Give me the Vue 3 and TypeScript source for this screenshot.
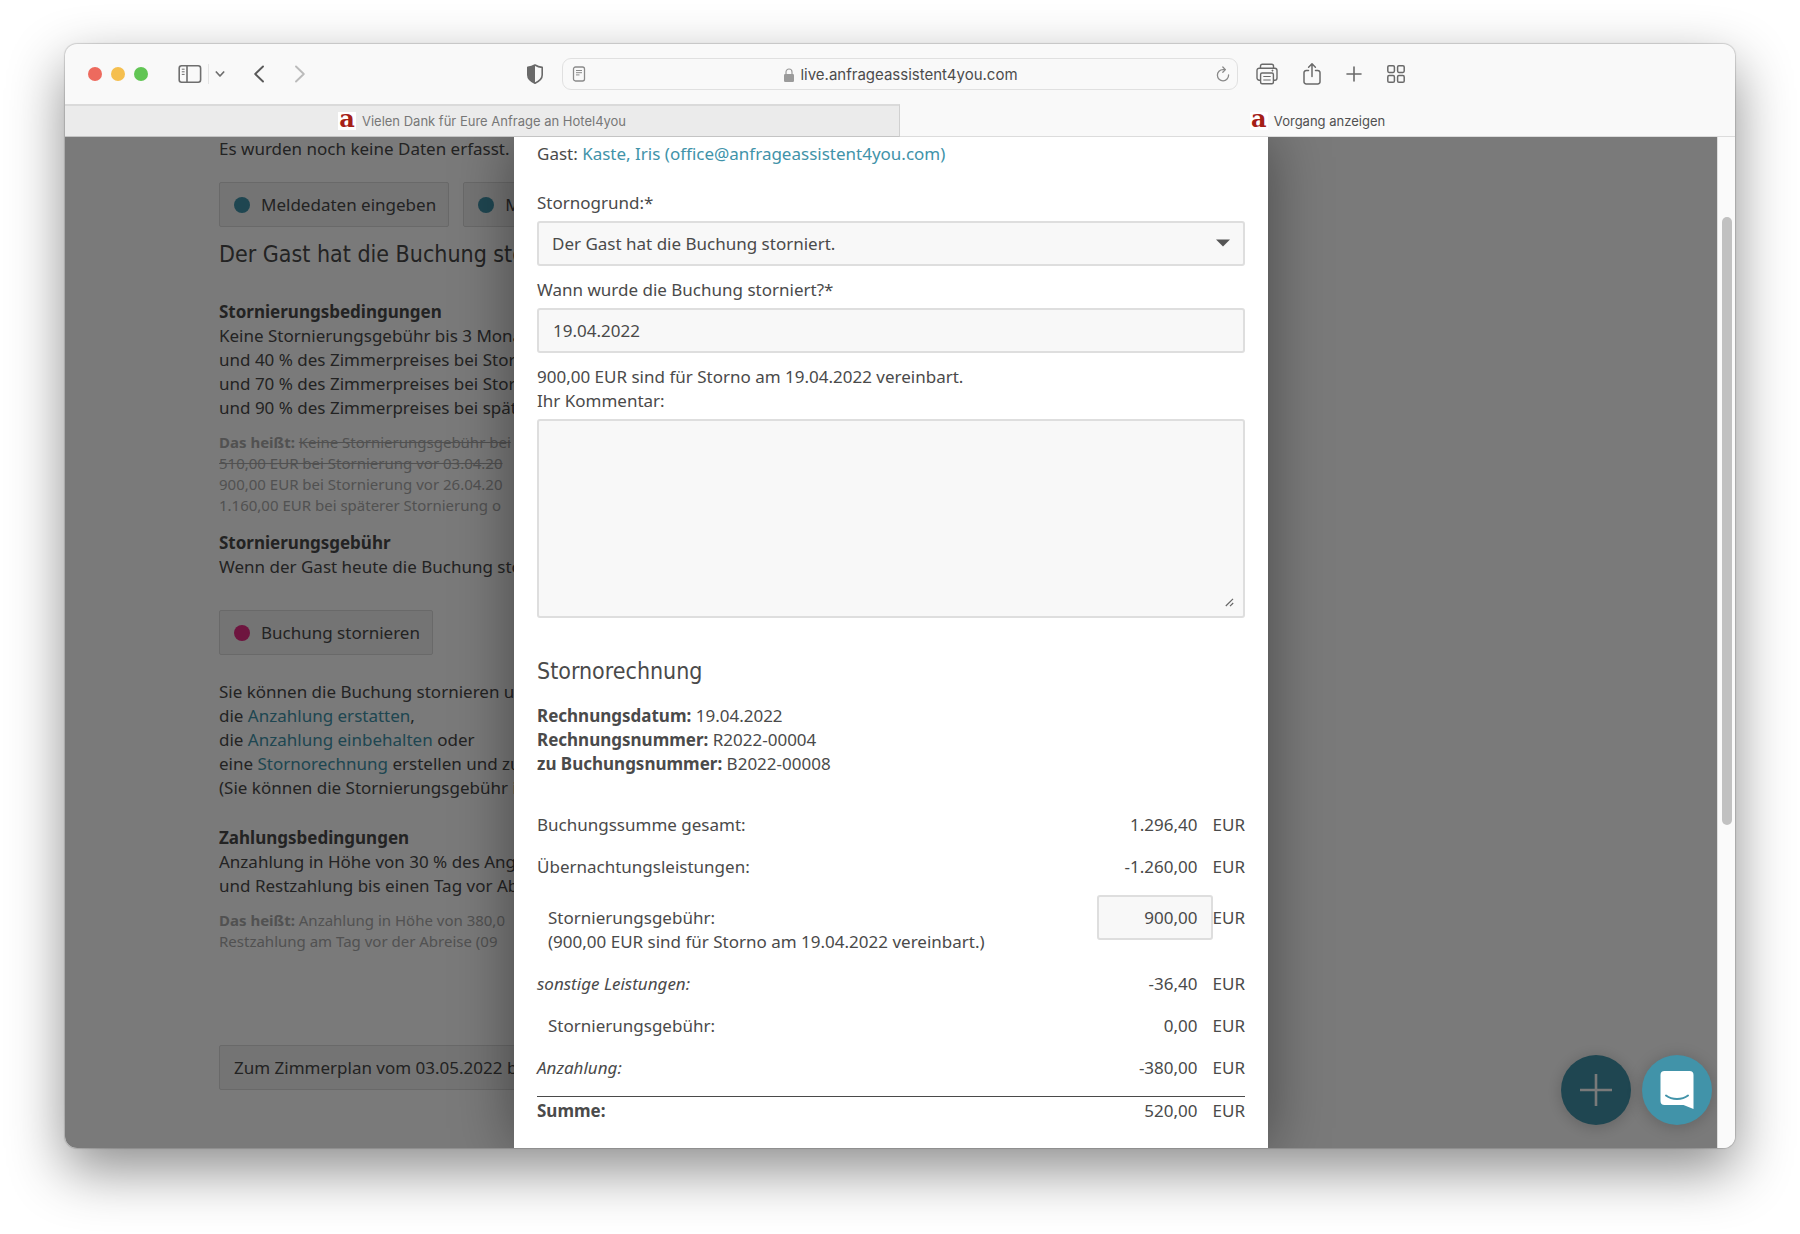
<script setup lang="ts">
import { ref } from 'vue'

interface InvoiceRow {
  label: string
  note?: string
  amount: string
  indent?: boolean
  italic?: boolean
  editable?: boolean
}

const reason = ref('guest')
const cancelDate = ref('19.04.2022')
const comment = ref('')
const fee = ref('900,00')

const rows: InvoiceRow[] = [
  { label: 'Buchungssumme gesamt:', amount: '1.296,40' },
  { label: 'Übernachtungsleistungen:', amount: '-1.260,00' },
  {
    label: 'Stornierungsgebühr:',
    note: '(900,00 EUR sind für Storno am 19.04.2022 vereinbart.)',
    amount: '900,00',
    indent: true,
    editable: true,
  },
  { label: 'sonstige Leistungen:', amount: '-36,40', italic: true },
  { label: 'Stornierungsgebühr:', amount: '0,00', indent: true },
  { label: 'Anzahlung:', amount: '-380,00', italic: true },
]
</script>

<template>
  <div class="desktop">
    <div class="window">
      <header class="toolbar">
        <div class="tools-left">
          <div class="lights">
            <span class="light red"></span>
            <span class="light yellow"></span>
            <span class="light green"></span>
          </div>
          <div class="sidebar-tools">
            <button class="icon-btn" aria-label="Seitenleiste">
              <svg width="24" height="20" viewBox="0 0 24 20" fill="none" stroke="#6e6e6e" stroke-width="1.6">
                <rect x="1.2" y="1.8" width="21.4" height="16.4" rx="2.4" />
                <path d="M9 2v16" />
                <path d="M3.8 5.2h2.8M3.8 7.8h2.8M3.8 10.4h2.8" stroke-width="1" />
              </svg>
            </button>
            <span class="divider"></span>
            <button class="icon-btn" aria-label="Tabgruppen">
              <svg width="10" height="8" viewBox="0 0 10 8" fill="none" stroke="#6e6e6e" stroke-width="1.7" stroke-linecap="round" stroke-linejoin="round">
                <path d="M1.3 2l3.7 4 3.7-4" />
              </svg>
            </button>
          </div>
          <nav class="history">
            <button class="icon-btn" aria-label="Zurück">
              <svg width="12" height="20" viewBox="0 0 12 20" fill="none" stroke="#5a5a5a" stroke-width="1.9" stroke-linecap="round" stroke-linejoin="round">
                <path d="M10 2.5L2.2 10l7.8 7.5" />
              </svg>
            </button>
            <button class="icon-btn" aria-label="Vorwärts">
              <svg width="12" height="20" viewBox="0 0 12 20" fill="none" stroke="#bbb" stroke-width="1.9" stroke-linecap="round" stroke-linejoin="round">
                <path d="M2 2.5L9.8 10 2 17.5" />
              </svg>
            </button>
          </nav>
          <button class="icon-btn shield" aria-label="Datenschutz">
            <svg width="18" height="22" viewBox="0 0 18 22">
              <path d="M9 2C6.5 3.6 4.3 4.2 1.8 4.4V12c0 3.8 3 6.3 7.2 8.2 4.2-1.9 7.2-4.4 7.2-8.2V4.400C13.7 4.2 11.5 3.6 9 2z" fill="none" stroke="#6a6a6a" stroke-width="1.6" stroke-linejoin="round" />
              <path d="M9 2C6.5 3.6 4.3 4.2 1.8 4.4V12c0 3.8 3 6.3 7.2 8.2z" fill="#6a6a6a" />
            </svg>
          </button>
        </div>

        <div class="urlbar">
          <svg width="14" height="16" viewBox="0 0 14 16" fill="none" stroke="#8a8a8a" stroke-width="1.3">
            <rect x="1.5" y="1" width="11" height="14" rx="2" />
            <path d="M4 4.5h6M4 6.7h6M4 8.900h3.5" stroke-width="1" />
          </svg>
          <div class="address">
            <svg width="10" height="14" viewBox="0 0 10 14">
              <rect x="0" y="6" width="10" height="8" rx="1.3" fill="#9b9b9b" />
              <path d="M2 6.5V4a3 3 0 0 1 6 0v2.5" fill="none" stroke="#9b9b9b" stroke-width="1.2" />
            </svg>
            <span>live.anfrageassistent4you.com</span>
          </div>
          <button class="icon-btn" aria-label="Neu laden">
            <svg width="14" height="16" viewBox="0 0 14 16" fill="none" stroke="#8a8a8a" stroke-width="1.3" stroke-linecap="round" stroke-linejoin="round">
              <path d="M12.6 9A5.6 5.6 0 1 1 7 3.6h2" />
              <path d="M6.8 1l2.6 2.6L6.8 6.2" />
            </svg>
          </button>
        </div>

        <div class="tools-right">
          <button class="icon-btn" aria-label="Drucken">
            <svg width="22" height="22" viewBox="0 0 22 22" fill="none" stroke="#6a6a6a" stroke-width="1.4" stroke-linejoin="round">
              <path d="M4.5 5.2V3A1.8 1.8 0 0 1 6.3 1.2h9.4A1.8 1.8 0 0 1 17.5 3v2.2" />
              <path d="M4.6 17.2H3.2A2.2 2.2 0 0 1 1 15V7.4a2.2 2.2 0 0 1 2.2-2.2h15.6A2.2 2.2 0 0 1 21 7.4V15a2.2 2.2 0 0 1-2.2 2.2h-1.4" />
              <rect x="4.6" y="10" width="12.8" height="10.8" rx="1.5" />
              <path d="M7.3 13.5h7.4M7.3 17h7.4" stroke-width="1.2" />
              <circle cx="16.5" cy="7.6" r=".6" fill="#6a6a6a" stroke-width=".8" />
            </svg>
          </button>
          <button class="icon-btn" aria-label="Teilen">
            <svg width="20" height="24" viewBox="0 0 20 24" fill="none" stroke="#6a6a6a" stroke-width="1.5" stroke-linecap="round" stroke-linejoin="round">
              <path d="M6.5 8.5H4.2A2.2 2.2 0 0 0 2 10.7v9A2.2 2.2 0 0 0 4.2 22h11.6a2.2 2.2 0 0 0 2.2-2.3v-9a2.2 2.2 0 0 0-2.2-2.2h-2.3" />
              <path d="M10 14.5V2M6.6 5.2L10 1.8l3.4 3.4" />
            </svg>
          </button>
          <button class="icon-btn" aria-label="Neuer Tab">
            <svg width="16" height="16" viewBox="0 0 16 16" stroke="#6a6a6a" stroke-width="1.6" stroke-linecap="round">
              <path d="M8 1v14M1 8h14" />
            </svg>
          </button>
          <button class="icon-btn" aria-label="Tabübersicht">
            <svg width="20" height="20" viewBox="0 0 20 20" fill="none" stroke="#6a6a6a" stroke-width="1.5">
              <rect x="1.8" y="1.8" width="6.6" height="6.6" rx="1.3" />
              <rect x="11.6" y="1.8" width="6.6" height="6.6" rx="1.3" />
              <rect x="1.8" y="11.6" width="6.6" height="6.6" rx="1.3" />
              <rect x="11.6" y="11.6" width="6.6" height="6.6" rx="1.3" />
            </svg>
          </button>
        </div>
      </header>

      <nav class="tabs">
        <button class="tab inactive"><span class="favicon">a</span><span>Vielen Dank für Eure Anfrage an Hotel4you</span></button>
        <button class="tab"><span class="favicon">a</span><span>Vorgang anzeigen</span></button>
      </nav>

      <div class="viewport">
        <div class="pane">
          <main class="page">
            <p>Es wurden noch keine Daten erfasst. B</p>
            <div class="actions">
              <button class="btn"><span class="dot teal"></span>Meldedaten eingeben</button>
              <button class="btn"><span class="dot teal"></span>M</button>
            </div>
            <h2>Der Gast hat die Buchung sto</h2>
            <p class="terms">
              <strong>Stornierungsbedingungen</strong><br />
              Keine Stornierungsgebühr bis 3 Mona<br />
              und 40 % des Zimmerpreises bei Storn<br />
              und 70 % des Zimmerpreises bei Storn<br />
              und 90 % des Zimmerpreises bei spät
            </p>
            <p class="small">
              <strong>Das heißt:</strong> <s>Keine Stornierungsgebühr bei</s><br />
              <s>510,00 EUR bei Stornierung vor 03.04.20</s><br />
              900,00 EUR bei Stornierung vor 26.04.20<br />
              1.160,00 EUR bei späterer Stornierung o
            </p>
            <p class="fee">
              <strong>Stornierungsgebühr</strong><br />
              Wenn der Gast heute die Buchung sto
            </p>
            <div class="actions cancel">
              <button class="btn"><span class="dot pink"></span>Buchung stornieren</button>
            </div>
            <p class="hints">
              Sie können die Buchung stornieren un<br />
              die <a href="#">Anzahlung erstatten</a>,<br />
              die <a href="#">Anzahlung einbehalten</a> oder<br />
              eine <a href="#">Stornorechnung</a> erstellen und zu<br />
              (Sie können die Stornierungsgebühr in
            </p>
            <p class="payment">
              <strong>Zahlungsbedingungen</strong><br />
              Anzahlung in Höhe von 30 % des Ang<br />
              und Restzahlung bis einen Tag vor Ab
            </p>
            <p class="small">
              <strong>Das heißt:</strong> Anzahlung in Höhe von 380,0<br />
              Restzahlung am Tag vor der Abreise (09
            </p>
            <div class="actions plan">
              <button class="btn">Zum Zimmerplan vom 03.05.2022 b</button>
            </div>
          </main>

          <button class="fab add" aria-label="Neu">
            <svg width="34" height="34" viewBox="0 0 34 34" stroke="#fff" stroke-width="2.6">
              <path d="M17 1v32M1 17h32" />
            </svg>
          </button>

          <div class="overlay">
            <form class="modal" @submit.prevent>
              <p>Gast: <a href="#">Kaste, Iris (office@anfrageassistent4you.com)</a></p>

              <div class="field first">
                <label for="reason">Stornogrund:*</label>
                <div class="control">
                  <select id="reason" v-model="reason">
                    <option value="guest">Der Gast hat die Buchung storniert.</option>
                  </select>
                  <svg class="caret" width="14" height="8" viewBox="0 0 14 8"><path d="M0 .5h14L7 7.5z" fill="#555" /></svg>
                </div>
              </div>

              <div class="field">
                <label for="date">Wann wurde die Buchung storniert?*</label>
                <input id="date" v-model="cancelDate" type="text" />
              </div>

              <div class="field">
                <p>900,00 EUR sind für Storno am 19.04.2022 vereinbart.</p>
                <label for="comment">Ihr Kommentar:</label>
                <div class="control">
                  <textarea id="comment" v-model="comment"></textarea>
                  <svg class="grip" width="9" height="9" viewBox="0 0 9 9" stroke="#666" stroke-width="1.2"><path d="M.8 8L8 .8M5 8.2L8.2 5" /></svg>
                </div>
              </div>

              <h2>Stornorechnung</h2>
              <p>
                <strong>Rechnungsdatum:</strong> 19.04.2022<br />
                <strong>Rechnungsnummer:</strong> R2022-00004<br />
                <strong>zu Buchungsnummer:</strong> B2022-00008
              </p>

              <table>
                <tbody>
                  <tr v-for="(row, i) in rows" :key="i" :class="{ indent: row.indent, italic: row.italic, editable: row.editable }">
                    <th scope="row">
                      <label v-if="row.editable" for="fee">{{ row.label }}<br />{{ row.note }}</label>
                      <template v-else>{{ row.label }}</template>
                    </th>
                    <td class="amount">
                      <input v-if="row.editable" id="fee" v-model="fee" type="text" />
                      <template v-else>{{ row.amount }}</template>
                    </td>
                    <td class="unit">EUR</td>
                  </tr>
                </tbody>
                <tfoot>
                  <tr>
                    <th scope="row">Summe:</th>
                    <td class="amount">520,00</td>
                    <td class="unit">EUR</td>
                  </tr>
                </tfoot>
              </table>
            </form>
          </div>

          <button class="fab chat" aria-label="Chat öffnen">
            <svg width="34" height="38" viewBox="0 0 34 38">
              <path d="M4.5 0h25A4 4 0 0 1 33.5 4v34l-10-4h-19A4 4 0 0 1 .5 30V4A4 4 0 0 1 4.5 0z" fill="#fff" />
              <path d="M6 24.5c6 4.6 16 4.6 22 0" fill="none" stroke="#4193a9" stroke-width="2" stroke-linecap="round" />
            </svg>
          </button>
        </div>
        <div class="scrollbar"><div class="thumb"></div></div>
      </div>
    </div>
  </div>
</template>

<style>
body {
  background: #fff;
}
</style>

<style scoped>
.desktop {
  box-sizing: border-box;
  height: 100vh;
  padding: 44px 65px 86px;
  overflow: hidden;
  font: 17px/24px "Noto Sans", sans-serif;
  color: #4a4a4a;
}

.window {
  display: flex;
  flex-direction: column;
  height: 100%;
  overflow: hidden;
  border-radius: 12px;
  background: #f9f9f9;
  box-shadow: 0 0 1px 1px rgba(0, 0, 0, 0.15), 0 22px 56px rgba(0, 0, 0, 0.45);
}

p,
h2 {
  margin: 0;
}

h2 {
  font: 400 23px/30px "DejaVu Sans Condensed", "DejaVu Sans", sans-serif;
}

button {
  padding: 0;
  border: 0;
  background: none;
  font: inherit;
  color: inherit;
}

a {
  color: #4193a9;
  text-decoration: none;
}

/* Browser chrome */
.toolbar {
  display: grid;
  grid-template-columns: minmax(0, 1fr) minmax(0, 676px) minmax(0, 1fr);
  align-items: center;
  flex: none;
  height: 60px;
  font-family: Inter, sans-serif;
}

.icon-btn {
  display: flex;
}

.tools-left {
  display: flex;
  align-items: center;
  padding: 0 18px 0 23px;
}

.lights {
  display: flex;
  gap: 9px;
}

.light {
  width: 14px;
  height: 14px;
  border-radius: 50%;
}

.red {
  background: #ed6a5e;
}

.yellow {
  background: #f5bf4f;
}

.green {
  background: #61c554;
}

.sidebar-tools {
  display: flex;
  align-items: center;
  gap: 6px;
  margin-left: 30px;
}

.divider {
  width: 1px;
  height: 20px;
  background: #e4e4e4;
}

.history {
  display: flex;
  gap: 29px;
  margin-left: 28px;
}

.shield {
  margin-left: auto;
}

.urlbar {
  box-sizing: border-box;
  display: flex;
  align-items: center;
  height: 32px;
  padding: 0 7px 0 9px;
  border: 1px solid #e0e0e0;
  border-radius: 9px;
}

.address {
  display: flex;
  flex: 1;
  align-items: center;
  justify-content: center;
  gap: 6px;
  padding-top: 2px;
  font-size: 15px;
  color: #4c4c4c;
}

.tools-right {
  display: flex;
  align-items: center;
  gap: 24px;
  padding-left: 18px;
}

.tabs {
  display: grid;
  grid-template-columns: 1fr 1fr;
  flex: none;
  height: 33px;
}

.tab {
  box-sizing: border-box;
  display: flex;
  align-items: center;
  justify-content: center;
  gap: 6px;
  border-top: 2px solid transparent;
  border-bottom: 1px solid #dcdcdc;
  font: 13px/20px Inter, sans-serif;
  color: #505050;
}

.tab.inactive {
  border-top-color: #dadada;
  border-right: 1px solid #d0d0d0;
  border-bottom-color: #c4c4c4;
  background: #ebebeb;
  color: #777;
}

.favicon {
  width: 18px;
  height: 18px;
  background: #fff;
  font: 700 24px/14px "DejaVu Serif", serif;
  color: #a52018;
}

/* Page behind the dialog */
.viewport {
  display: flex;
  flex: 1;
  min-height: 0;
}

.pane {
  position: relative;
  flex: 1;
  overflow: hidden;
  background: #fff;
}

.scrollbar {
  box-sizing: border-box;
  width: 18px;
  padding: 80px 3px 0 4px;
  border-left: 1px solid #ddd;
  background: #fafafa;
}

.thumb {
  height: 66%;
  max-height: 608px;
  border-radius: 5px;
  background: #c1c1c1;
}

.page {
  padding-left: 154px;
  white-space: nowrap;
}

.actions {
  display: flex;
  gap: 14px;
  margin-top: 21px;
}

.btn {
  box-sizing: border-box;
  display: flex;
  align-items: center;
  height: 45px;
  padding: 0 12px 0 14px;
  border: 1px solid #dcdcdc;
  border-radius: 2px;
  background: #f2f2f2;
}

.dot {
  width: 16px;
  height: 16px;
  margin-right: 11px;
  border-radius: 50%;
}

.teal {
  background: #4193a9;
}

.pink {
  background: #e62c84;
}

.page h2 {
  margin-top: 12px;
}

.terms {
  margin-top: 31px;
}

.small {
  margin-top: 12px;
  font-size: 15px;
  line-height: 21px;
  color: #aaa;
}

.fee {
  margin-top: 15px;
}

.cancel {
  margin-top: 31px;
}

.hints {
  margin-top: 25px;
}

.payment {
  margin-top: 26px;
}

.plan {
  margin-top: 93px;
}

/* Dialog */
.overlay {
  position: absolute;
  inset: 0;
  display: flex;
  justify-content: center;
  background: rgba(0, 0, 0, 0.52);
}

.modal {
  box-sizing: border-box;
  width: 754px;
  max-width: 100%;
  padding: 5px 23px 0;
  background: #fff;
  box-shadow: 0 0 56px rgba(0, 0, 0, 0.42);
}

.field {
  margin-top: 12px;
}

.field.first {
  margin-top: 25px;
}

.field label {
  display: block;
  margin-bottom: 6px;
}

.control {
  position: relative;
}

input,
select,
textarea {
  box-sizing: border-box;
  display: block;
  width: 100%;
  height: 45px;
  margin: 0;
  padding: 0 14px;
  border: 2px solid #dedede;
  border-radius: 3px;
  outline: 0;
  background: #f8f8f8;
  font: inherit;
  color: inherit;
  appearance: none;
}

select {
  padding: 0 13px;
}

textarea {
  height: 199px;
  padding: 12px 14px;
  resize: none;
}

.caret {
  position: absolute;
  top: 18px;
  right: 15px;
}

.grip {
  position: absolute;
  right: 11px;
  bottom: 11px;
}

.modal h2 {
  margin: 38px 0 18px;
}

table {
  width: 100%;
  margin-top: 28px;
  border-collapse: collapse;
}

th,
td {
  padding: 9px 0;
  font-weight: 400;
  text-align: left;
  vertical-align: top;
}

.italic th {
  font-style: italic;
}

.indent th {
  padding-left: 11px;
}

.amount {
  width: 101px;
  padding-right: 15px;
  text-align: right;
}

.unit {
  width: 30px;
}

.editable th,
.editable .unit {
  padding-top: 18px;
}

.editable .amount {
  padding: 7px 0 0;
}

.editable input {
  padding: 0 13px;
  text-align: right;
}

tbody tr:last-child > * {
  padding-bottom: 16px;
}

tfoot tr {
  border-top: 1px solid #4a4a4a;
}

tfoot th,
tfoot td {
  padding-top: 2px;
  padding-bottom: 2px;
}

tfoot th {
  font-weight: 700;
}

/* Floating buttons */
.fab {
  position: absolute;
  bottom: 23px;
  display: flex;
  align-items: center;
  justify-content: center;
  width: 70px;
  height: 70px;
  border-radius: 50%;
  background: #4193a9;
  box-shadow: 0 2px 16px rgba(0, 0, 0, 0.2);
}

.add {
  right: 86px;
}

.chat {
  right: 5px;
}
</style>
